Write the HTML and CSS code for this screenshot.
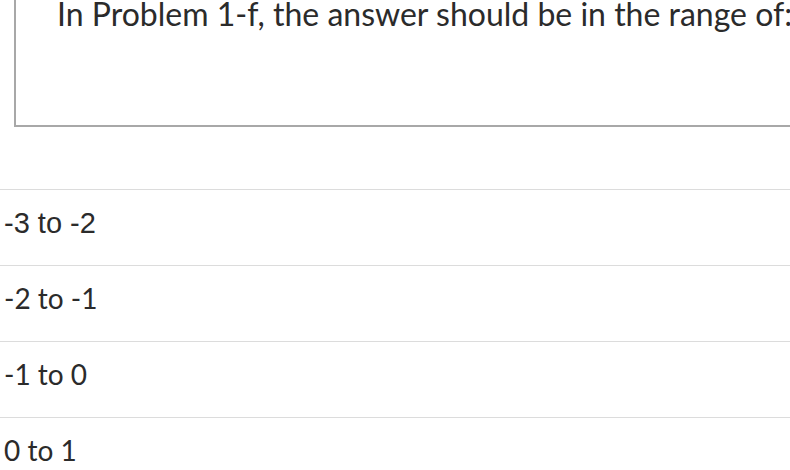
FILE: index.html
```html
<!DOCTYPE html>
<html lang="en">
<head>
  <meta charset="UTF-8" />
  <meta name="viewport" content="width=device-width, initial-scale=1.0"/>
  <title>Quiz Question</title>
  <link rel="stylesheet" href="styles.css">
</head>
<body>
  <div class="question">
    <p class="question-text">In Problem 1-f, the answer should be in the range of:</p>
  </div>

  <div class="answers">
    <div class="answer"><span class="pasted">-3 to -2</span></div>
    <div class="answer">-2 to -1</div>
    <div class="answer">-1 to 0</div>
    <div class="answer">0 to 1</div>
  </div>
</body>
</html>
```

FILE: styles.css
```css
body { font-family: Lato, "Open Sans", sans-serif; color: #2b2b2b; margin: 0; overflow: hidden; }

.question {
  margin: -20px 0 0 14px;
  height: 147px;
  box-sizing: border-box;
  border-left: 2px solid #a8a8a8;
  border-bottom: 2px solid #a8a8a8;
  padding: 12px 0 0 41px;
}
.question-text { margin: 0; font-size: 32px; line-height: 43px; white-space: nowrap; }

.answers { margin-top: 62px; }
.answer {
  border-top: 1px solid #dcdcdc;
  height: 60px;
  padding: 15px 0 0 4px;
  font-size: 28px;
  line-height: 34px;
}
/* first answer was pasted in with its own font */
.pasted { font-family: "Liberation Sans", Arial, sans-serif; font-size: 29px; }
```
